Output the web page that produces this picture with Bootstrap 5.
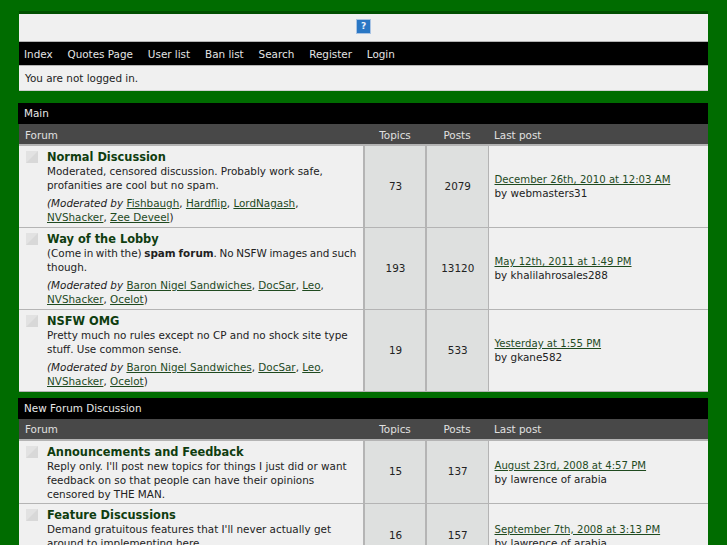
<!DOCTYPE html>
<html lang="en">
<head>
  <meta charset="UTF-8" />
  <meta name="viewport" content="width=device-width, initial-scale=1.0" />
  <title>Forum Index</title>
  <link href="https://cdn.jsdelivr.net/npm/bootstrap@5.3.0/dist/css/bootstrap.min.css" rel="stylesheet" />
  <script src="https://cdn.jsdelivr.net/npm/bootstrap@5.3.0/dist/js/bootstrap.bundle.min.js"></script>
  <style>
    html, body {
      height: 545px;
      overflow: hidden;
    }
    body {
      background-color: #006c00;
      font-family: "DejaVu Sans", sans-serif;
      font-size: 10.4px;
      line-height: 14px;
      color: #222;
      padding: 11px 19px 0;
    }
    a {
      color: #1f4a1f;
    }
    /* Top box */
    .top-box {
      border-top: 3px solid #005000;
      margin-bottom: 12px;
    }
    .logo-bar {
      background: #f0f0f0;
      height: 28px;
      padding-bottom: 3px;
      border-bottom: 1px solid #b4b4b4;
    }
    .help-icon {
      width: 15px;
      height: 15px;
      border: 1px solid #a9c4e4;
      background: #2a77c4;
      color: #e8f0fa;
      font-size: 9px;
      font-weight: bold;
      line-height: 13px;
      text-align: center;
    }
    .menu-bar {
      background: #000;
      height: 24px;
      border-bottom: 1px solid #b4b4b4;
      padding: 1px 5px 0;
      gap: 14.9px;
    }
    .menu-bar a {
      color: #e4e4e4;
      text-decoration: none;
    }
    .welcome-bar {
      background: #f0f0f0;
      height: 25px;
      border-bottom: 1px solid #cfcfcf;
      padding: 0 6px;
    }
    /* Forum tables */
    .cat-head {
      background: #000;
      color: #e8e8e8;
      height: 21px;
      line-height: 21px;
      padding-left: 6px;
      width: 690px;
      margin-left: -1px;
    }
    .forum-tbl {
      width: 689px;
      table-layout: fixed;
      border-collapse: collapse;
      margin-bottom: 6px;
    }
    .forum-tbl th {
      background: #484848;
      color: #e0e0e0;
      font-weight: normal;
      height: 21px;
      padding: 1px 6px 0;
      border-bottom: 2px solid #b4b4b4;
    }
    .forum-tbl td {
      background: #f0f0f0;
      border-bottom: 1px solid #b4b4b4;
      padding: 2px 5px 3px 6px;
      vertical-align: middle;
    }
    .forum-tbl td.count-cell {
      background: #dee0df;
      border-left: 2px solid #b4b4b4;
      text-align: center;
    }
    .forum-tbl td.last-cell {
      border-left: 1px solid #b4b4b4;
      padding-top: 3px;
    }
    .forum-tbl td.name-cell {
      vertical-align: top;
      padding: 4px 4px 2px 6px;
    }
    .forum-row {
      height: 82px;
    }
    .forum-row-3 {
      height: 64px;
    }
    .status-icon {
      width: 12px;
      height: 12px;
      margin-top: 1px;
      margin-left: 1px;
      flex: none;
    }
    .name-wrap {
      gap: 9px;
    }
    .forum-name {
      display: block;
      font-size: 11.4px;
      font-weight: bold;
      line-height: 14px;
      color: #0f3d0f;
      text-decoration: none;
    }
    .forum-mods {
      margin-top: 4px;
    }
    .desc-tight {
      word-spacing: -.7px;
    }
    .post-date {
      display: inline-block;
      font-size: 10.15px;
      line-height: 13px;
    }
  </style>
</head>
<body>
  <!-- Header -->
  <div class="top-box">
    <div class="logo-bar d-flex justify-content-center align-items-center">
      <div class="help-icon">?</div>
    </div>
    <div class="menu-bar d-flex align-items-center">
      <a href="#">Index</a>
      <a href="#">Quotes Page</a>
      <a href="#">User list</a>
      <a href="#">Ban list</a>
      <a href="#">Search</a>
      <a href="#">Register</a>
      <a href="#">Login</a>
    </div>
    <div class="welcome-bar d-flex align-items-center">You are not logged in.</div>
  </div>

  <!-- Main -->
  <div class="cat-head">Main</div>
  <table class="forum-tbl">
    <colgroup><col style="width:345px"><col style="width:62px"><col style="width:62px"><col></colgroup>
    <thead>
      <tr><th>Forum</th><th class="text-center">Topics</th><th class="text-center">Posts</th><th>Last post</th></tr>
    </thead>
    <tbody>
      <tr class="forum-row">
        <td class="name-cell">
          <div class="name-wrap d-flex">
            <svg class="status-icon" viewBox="0 0 12 12"><rect width="12" height="12" fill="#e2e2e2"/><path d="M0 12L12 0V12Z" fill="#d8d8d8"/></svg>
            <div>
              <a class="forum-name" href="#">Normal Discussion</a>
              <div>Moderated, censored discussion. Probably work safe, profanities are cool but no spam.</div>
              <div class="forum-mods"><em>(Moderated by</em> <a href="#">Fishbaugh</a>, <a href="#">Hardflip</a>, <a href="#">LordNagash</a>, <a href="#">NVShacker</a>, <a href="#">Zee Deveel</a>)</div>
            </div>
          </div>
        </td>
        <td class="count-cell">73</td>
        <td class="count-cell">2079</td>
        <td class="last-cell"><a class="post-date" href="#">December 26th, 2010 at 12:03 AM</a><br>by webmasters31</td>
      </tr>
      <tr class="forum-row">
        <td class="name-cell">
          <div class="name-wrap d-flex">
            <svg class="status-icon" viewBox="0 0 12 12"><rect width="12" height="12" fill="#e2e2e2"/><path d="M0 12L12 0V12Z" fill="#d8d8d8"/></svg>
            <div>
              <a class="forum-name" href="#">Way of the Lobby</a>
              <div class="desc-tight">(Come in with the) <strong>spam forum</strong>. No NSFW images and such though.</div>
              <div class="forum-mods"><em>(Moderated by</em> <a href="#">Baron Nigel Sandwiches</a>, <a href="#">DocSar</a>, <a href="#">Leo</a>, <a href="#">NVShacker</a>, <a href="#">Ocelot</a>)</div>
            </div>
          </div>
        </td>
        <td class="count-cell">193</td>
        <td class="count-cell">13120</td>
        <td class="last-cell"><a class="post-date" href="#">May 12th, 2011 at 1:49 PM</a><br>by khalilahrosales288</td>
      </tr>
      <tr class="forum-row">
        <td class="name-cell">
          <div class="name-wrap d-flex">
            <svg class="status-icon" viewBox="0 0 12 12"><rect width="12" height="12" fill="#e2e2e2"/><path d="M0 12L12 0V12Z" fill="#d8d8d8"/></svg>
            <div>
              <a class="forum-name" href="#">NSFW OMG</a>
              <div>Pretty much no rules except no CP and no shock site type stuff. Use common sense.</div>
              <div class="forum-mods"><em>(Moderated by</em> <a href="#">Baron Nigel Sandwiches</a>, <a href="#">DocSar</a>, <a href="#">Leo</a>, <a href="#">NVShacker</a>, <a href="#">Ocelot</a>)</div>
            </div>
          </div>
        </td>
        <td class="count-cell">19</td>
        <td class="count-cell">533</td>
        <td class="last-cell"><a class="post-date" href="#">Yesterday at 1:55 PM</a><br>by gkane582</td>
      </tr>
    </tbody>
  </table>

  <!-- New Forum Discussion -->
  <div class="cat-head">New Forum Discussion</div>
  <table class="forum-tbl">
    <colgroup><col style="width:345px"><col style="width:62px"><col style="width:62px"><col></colgroup>
    <thead>
      <tr><th>Forum</th><th class="text-center">Topics</th><th class="text-center">Posts</th><th>Last post</th></tr>
    </thead>
    <tbody>
      <tr class="forum-row-3">
        <td class="name-cell">
          <div class="name-wrap d-flex">
            <svg class="status-icon" viewBox="0 0 12 12"><rect width="12" height="12" fill="#e2e2e2"/><path d="M0 12L12 0V12Z" fill="#d8d8d8"/></svg>
            <div>
              <a class="forum-name" href="#">Announcements and Feedback</a>
              <div>Reply only. I'll post new topics for things I just did or want feedback on so that people can have their opinions censored by THE MAN.</div>
            </div>
          </div>
        </td>
        <td class="count-cell">15</td>
        <td class="count-cell">137</td>
        <td class="last-cell"><a class="post-date" href="#">August 23rd, 2008 at 4:57 PM</a><br>by lawrence of arabia</td>
      </tr>
      <tr class="forum-row-3">
        <td class="name-cell">
          <div class="name-wrap d-flex">
            <svg class="status-icon" viewBox="0 0 12 12"><rect width="12" height="12" fill="#e2e2e2"/><path d="M0 12L12 0V12Z" fill="#d8d8d8"/></svg>
            <div>
              <a class="forum-name" href="#">Feature Discussions</a>
              <div>Demand gratuitous features that I'll never actually get around to implementing here.</div>
            </div>
          </div>
        </td>
        <td class="count-cell">16</td>
        <td class="count-cell">157</td>
        <td class="last-cell"><a class="post-date" href="#">September 7th, 2008 at 3:13 PM</a><br>by lawrence of arabia</td>
      </tr>
    </tbody>
  </table>
</body>
</html>
